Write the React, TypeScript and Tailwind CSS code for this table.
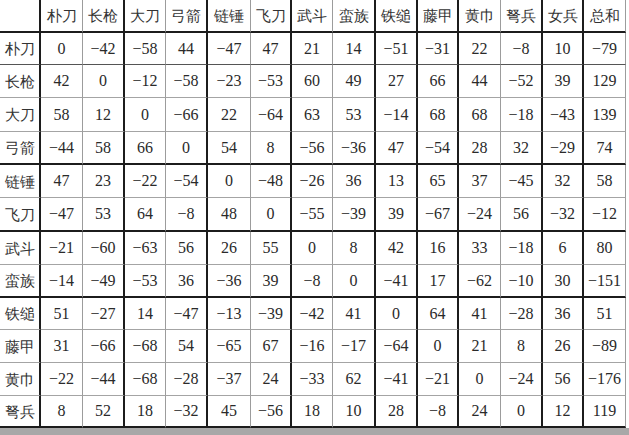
const heads = ['朴刀', '长枪', '大刀', '弓箭', '链锤', '飞刀', '武斗', '蛮族', '铁缒', '藤甲', '黄巾', '弩兵', '女兵', '总和']

const rows: [string, number[]][] = [
  ['朴刀', [0, -42, -58, 44, -47, 47, 21, 14, -51, -31, 22, -8, 10, -79]],
  ['长枪', [42, 0, -12, -58, -23, -53, 60, 49, 27, 66, 44, -52, 39, 129]],
  ['大刀', [58, 12, 0, -66, 22, -64, 63, 53, -14, 68, 68, -18, -43, 139]],
  ['弓箭', [-44, 58, 66, 0, 54, 8, -56, -36, 47, -54, 28, 32, -29, 74]],
  ['链锤', [47, 23, -22, -54, 0, -48, -26, 36, 13, 65, 37, -45, 32, 58]],
  ['飞刀', [-47, 53, 64, -8, 48, 0, -55, -39, 39, -67, -24, 56, -32, -12]],
  ['武斗', [-21, -60, -63, 56, 26, 55, 0, 8, 42, 16, 33, -18, 6, 80]],
  ['蛮族', [-14, -49, -53, 36, -36, 39, -8, 0, -41, 17, -62, -10, 30, -151]],
  ['铁缒', [51, -27, 14, -47, -13, -39, -42, 41, 0, 64, 41, -28, 36, 51]],
  ['藤甲', [31, -66, -68, 54, -65, 67, -16, -17, -64, 0, 21, 8, 26, -89]],
  ['黄巾', [-22, -44, -68, -28, -37, 24, -33, 62, -41, -21, 0, -24, 56, -176]],
  ['弩兵', [8, 52, 18, -32, 45, -56, 18, 10, 28, -8, 24, 0, 12, 119]],
]

// which grid lines print heavy in the scan
const darkCols = [0, 2, 4, 6, 8, 9, 10, 12, 13]
const darkRows = [0, 4, 6, 8, 12]

function Cell({ r, c, text, cjk }: { r: number; c: number; text: string; cjk: boolean }) {
  const right = darkCols.includes(c) ? 'border-r-2 border-r-[#1c1c1c]' : 'border-r border-r-[#9c9c9c]'
  const bottom = darkRows.includes(r)
    ? 'border-b-2 border-b-[#1c1c1c]'
    : r === 1
      ? 'border-b border-b-[#555]'
      : 'border-b border-b-[#a4a4a4]'
  return (
    <div className={`${right} ${bottom} flex items-center justify-center whitespace-nowrap`}>
      {cjk ? (
        <span className="font-sans text-[15px] text-[#333]">{text}</span>
      ) : (
        <span className="[font-family:Liberation_Serif,serif] text-[16px] text-[#2a2a2a]">{text}</span>
      )}
    </div>
  )
}

export default function App() {
  return (
    <div className="w-[629px] h-[435px] bg-white flex flex-col overflow-hidden">
      <div className="grid w-[626px] grid-cols-[41px_42px_42px_41px_42px_43px_41px_41px_43px_42px_41px_42px_42px_41px_42px] grid-rows-[33px_32px_33px_34px_33px_33px_34px_33px_33px_32px_33px_33px_32px]">
        <Cell r={0} c={0} text="" cjk />
        {heads.map((h, i) => (
          <Cell key={h} r={0} c={i + 1} text={h} cjk />
        ))}
        {rows.map(([name, vals], ri) => (
          <>
            <Cell key={name} r={ri + 1} c={0} text={name} cjk />
            {vals.map((v, ci) => (
              <Cell key={name + ci} r={ri + 1} c={ci + 1} text={v < 0 ? '−' + -v : String(v)} cjk={false} />
            ))}
          </>
        ))}
      </div>
      <div className="flex-1 bg-[#a8a8a8]" />
    </div>
  )
}
